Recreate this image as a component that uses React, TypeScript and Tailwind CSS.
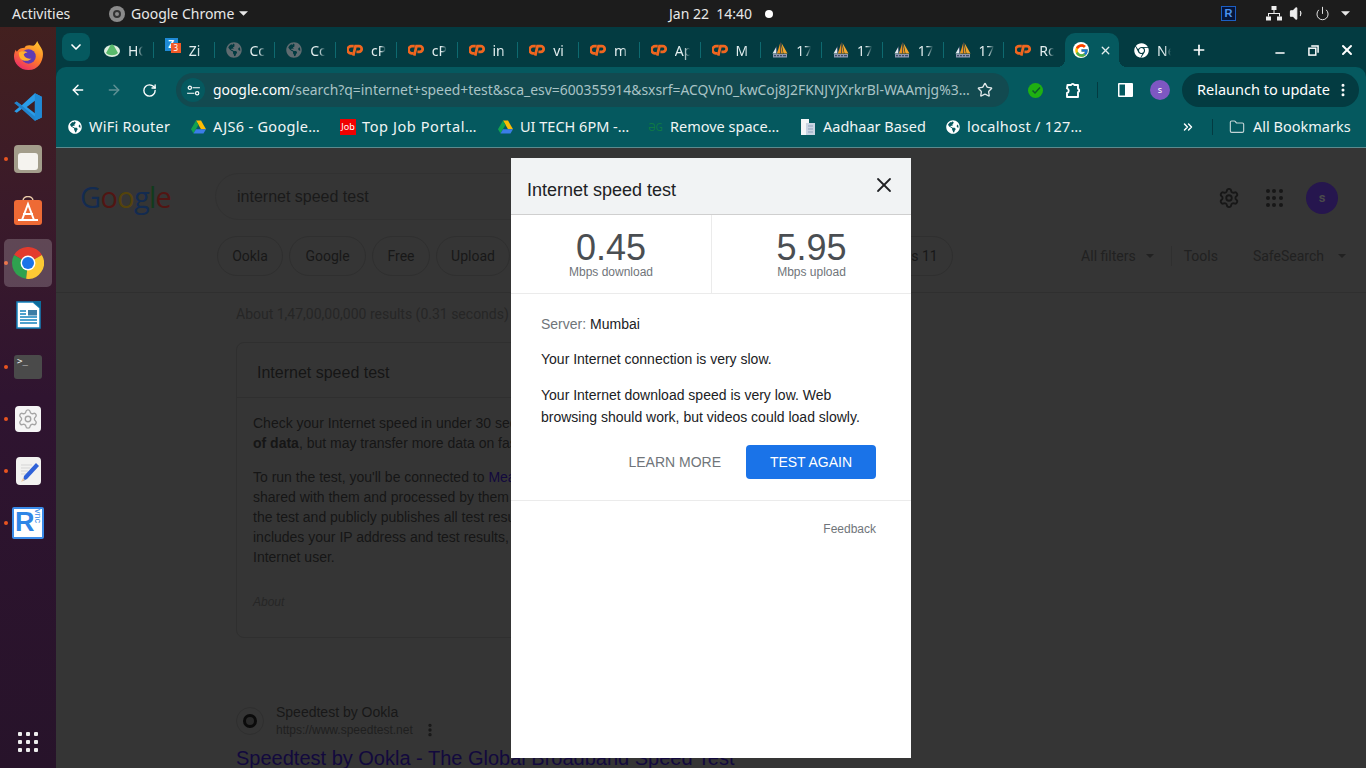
import React from "react";
import {
  ArrowLeft, ArrowRight, ChevronDown, ChevronsRight, EllipsisVertical, Folder, Minus, Plus,
  Power, RotateCw, Settings, Star, Volume1, X,
} from "lucide-react";
import { FaChrome, FaGlobeAmericas } from "react-icons/fa";
import { FcGoogle } from "react-icons/fc";

const Caret = ({ className }: { className: string }) => (
  <svg viewBox="0 0 10 5" className={className}>
    <path d="M0 0h10L5 5z" fill="currentColor" />
  </svg>
);

const CPanel = () => (
  <svg viewBox="0 0 17 12" className="w-4 h-3 shrink-0" fill="none" stroke="#f0661f" strokeWidth="2.9">
    <path d="M7.2 2H4.8a3.8 3.8 0 0 0-.8 7.6H6" />
    <path d="M6.6 12l2.4-10h3.6a2.7 2.7 0 0 1 0 6H10" />
  </svg>
);

const Sails = () => (
  <svg viewBox="0 0 16 16" className="w-4 h-4 shrink-0">
    <path d="M0.5 11.5L4.5 4.5 5.5 11.5z" fill="#e3e9ef" />
    <path d="M5 11.5L8.5 0 11 11.5z" fill="#e8941f" />
    <path d="M9.5 1L15.5 11.5H11.5z" fill="#f2a52e" />
    <path d="M8.5 0v11.5M4.5 4.5v7" stroke="#1c3350" strokeWidth=".7" />
    <rect x="1" y="12" width="14" height="3.5" fill="#8d97b0" />
    <path d="M2 13.7h2M5 13.7h2M8 13.7h2M11 13.7h3" stroke="#2d3a55" />
  </svg>
);

const Drive = () => (
  <svg viewBox="0 0 16 14" className="w-[15px] h-[14px] shrink-0">
    <path d="M5.3 0h5.4l5.3 9.3h-5.3z" fill="#fbbc04" />
    <path d="M5.3 0L0 9.3 2.7 14l5.3-9.3z" fill="#12a150" />
    <path d="M2.7 14h10.6l2.7-4.7H5.3z" fill="#3b7de8" />
  </svg>
);

const ChromeLogo = ({ className }: { className: string }) => (
  <svg viewBox="0 0 24 24" className={className}>
    <path d="M12 12L1.6 6A12 12 0 0 1 22.4 6z" fill="#e33b2e" />
    <path d="M12 12L1.6 6A12 12 0 0 0 10.6 23.9z" fill="#2fa24f" />
    <path d="M12 12l10.4-6A12 12 0 0 1 10.6 23.9z" fill="#fcc934" />
    <circle cx="12" cy="12" r="5.6" fill="#fff" />
    <circle cx="12" cy="12" r="4.5" fill="#1a73e8" />
  </svg>
);

const Firefox = () => (
  <svg viewBox="0 0 32 32" className="w-[31px] h-[31px]">
    <defs>
      <linearGradient id="ffx" x1="0.8" y1="0" x2="0.2" y2="1">
        <stop offset="0" stopColor="#ffc62e" />
        <stop offset="0.5" stopColor="#ff7b2a" />
        <stop offset="1" stopColor="#e9256e" />
      </linearGradient>
    </defs>
    <path d="M25 1c1 3 4 6 5.5 10 2 8-3 20-14.5 20C7 31 1 24 1 17c0-3 1-6 2-7 0 1 1 2 1 2 2-3 5-4 8-4 1-3 5-3 9-2 2-1 3-3 4-5z" fill="url(#ffx)" />
    <circle cx="16" cy="17" r="7.5" fill="#5f3bb5" />
    <path d="M6 13c3-2 7-2 9 0-2 0-3 1-4 2 1 3 4 5 8 4-3 4-10 3-12-1-1-2-1-4-1-5z" fill="#ffb02e" />
  </svg>
);

const VsCode = () => (
  <svg viewBox="0 0 24 24" className="w-[30px] h-[30px]">
    <path fillRule="evenodd" d="M17.5 1L23 3.7v16.6L17.5 23 7 13.5 3 16.5 1 15.3 5 12 1 8.7 3 7.5 7 10.5zM17.5 7L11 12l6.5 5z" fill="#2a9ce8" />
    <path d="M17.5 1L23 3.7v16.6L17.5 23z" fill="#1f8ad6" />
    <path d="M1 8.7L3 7.5l14.5 12V23L7 13.5z" fill="#1b6fb5" opacity=".55" />
  </svg>
);

const DockIcon = ({ running, children, active }: { running?: boolean; active?: boolean; children: React.ReactNode }) => (
  <div className="relative w-14 h-[52px] flex items-center justify-center shrink-0">
    {running && <span className="absolute left-1 top-[24px] w-1 h-1 rounded-full bg-[#e95420]" />}
    {active && <span className="absolute left-1 top-[2px] w-[48px] h-[48px] rounded-[5px] bg-white/20" />}
    <div className="relative flex items-center justify-center">{children}</div>
  </div>
);

const Dock = () => (
  <div className="w-14 shrink-0 flex flex-col pt-[2px] bg-[linear-gradient(180deg,#43201f_0%,#3a1a2a_25%,#2f1430_50%,#27132a_100%)]">
    <DockIcon><Firefox /></DockIcon>
    <DockIcon><VsCode /></DockIcon>
    <DockIcon running>
      <div className="w-7 h-[28px] rounded-[4px] bg-[#a39d8b] flex items-end justify-center pb-[3px]">
        <div className="w-5 h-[17px] rounded-[3px] bg-[#f5f3ef]" />
      </div>
    </DockIcon>
    <DockIcon>
      <svg viewBox="0 0 28 30" className="w-7 h-[30px]">
        <path d="M9 5c0-6 10-6 10 0" fill="none" stroke="#e8c9a8" strokeWidth="1.5" />
        <rect x="0" y="4" width="28" height="25" rx="3" fill="#ee6a35" />
        <path d="M8 24L14 8l6 16M9 18h10M4 24h20" fill="none" stroke="#fff" strokeWidth="2" />
      </svg>
    </DockIcon>
    <DockIcon running active><ChromeLogo className="w-8 h-8" /></DockIcon>
    <DockIcon>
      <svg viewBox="0 0 25 28" className="w-[25px] h-7">
        <path d="M1 1h16l7 6v20H1z" fill="#fff" stroke="#1583bd" strokeWidth="1.5" />
        <path d="M17 0l8 8V0z" fill="#0d6c9c" />
        <path d="M4 10h6M4 13h6M4 16h17M4 19h17M4 22h17" stroke="#1583bd" strokeWidth="1.4" />
        <rect x="12" y="9" width="9" height="5.5" fill="#3d7da5" />
      </svg>
    </DockIcon>
    <DockIcon running>
      <div className="w-7 h-6 rounded-[3px] bg-[#4a4a4a] text-[#eee] text-[9px] leading-[10px] pl-[3px] pt-[1px] font-['DejaVu_Sans_Mono',monospace]">&gt;_</div>
    </DockIcon>
    <DockIcon running>
      <div className="w-[26px] h-[26px] rounded-[4px] bg-[#f5f5f5] flex items-center justify-center">
        <Settings className="w-[22px] h-[22px] text-[#a5a5a5]" strokeWidth={1.5} />
      </div>
    </DockIcon>
    <DockIcon running>
      <div className="w-[25px] h-7 rounded-[4px] bg-[#f2f2f0] flex items-center justify-center">
        <svg viewBox="0 0 25 28" className="w-[25px] h-7">
          <path d="M5 8h11M5 11h9M5 14h7M5 17h5" stroke="#d5d5d5" />
          <path d="M8 19L20 6l3 3-12 13-4 2z" fill="#2f62d8" />
          <path d="M7 21l-2 4 4-2z" fill="#eccaa0" />
        </svg>
      </div>
    </DockIcon>
    <DockIcon running>
      <div className="relative w-8 h-8 rounded-[2px] bg-white border-2 border-[#3b8cea] overflow-hidden">
        <span className="absolute left-[1px] top-[-5px] text-[27px] leading-[36px] font-bold text-[#2f86e6] font-['Liberation_Sans',sans-serif]">R</span>
        <span className="absolute right-[0px] top-[0px] text-[9px] leading-[9px] text-[#2f86e6] [writing-mode:vertical-rl] font-['Liberation_Sans',sans-serif]">vnc</span>
      </div>
    </DockIcon>
    <div className="mt-auto mb-[16px] ml-[18px] grid grid-cols-3 gap-x-1 gap-y-1 w-[20px]">
      {Array.from({ length: 9 }).map((_, i) => (
        <span key={i} className="w-1 h-1 bg-[#eee] rounded-[1px]" />
      ))}
    </div>
  </div>
);

const TopBar = () => (
  <div className="h-[27px] bg-[#1c1c1c] flex items-center text-[#e8e8e8] text-[14px] font-['Noto_Sans',sans-serif] relative shrink-0">
    <span className="ml-[12px] w-[97px]">Activities</span>
    <span className="w-4 h-4 rounded-full bg-[#8b8b8b] flex items-center justify-center">
      <span className="w-[8px] h-[8px] rounded-full border-2 border-[#333]" />
    </span>
    <span className="ml-[6px]">Google Chrome</span>
    <Caret className="w-[9px] h-[5px] ml-[5px]" />
    <div className="absolute left-[669px] top-0 h-full flex items-center">
      <span className="text-[14px] whitespace-pre">Jan 22  14:40</span>
      <span className="ml-[13px] w-2 h-2 rounded-full bg-white" />
    </div>
    <div className="ml-auto flex items-center">
      <span className="w-[15px] h-[15px] bg-[#06153a] border border-[#1c5fc4] text-[#4b93ee] text-[11px] leading-[12px] font-bold flex justify-center font-['Liberation_Sans',sans-serif]">R</span>
      <svg viewBox="0 0 16 15" className="w-4 h-[15px] ml-[30px]" fill="#eee">
        <rect x="5.5" y="0" width="5" height="4" />
        <rect x="0" y="10.5" width="5" height="4" />
        <rect x="11" y="10.5" width="5" height="4" />
        <path d="M7.5 4h1v3h5.5v3.5h-1V8H3v2.5H2V7h5.5z" />
      </svg>
      <Volume1 className="w-[17px] h-[17px] ml-[7px] fill-[#eee] text-[#eee]" strokeWidth={1.5} />
      <Power className="w-[15px] h-[15px] ml-[9px] text-[#eee]" strokeWidth={1.5} />
      <Caret className="w-[9px] h-[5px] ml-[11px] mr-[16px]" />
    </div>
  </div>
);

type TabItem = { icon: React.ReactNode; label: string; noSep?: boolean };

const globeGrey = <FaGlobeAmericas className="w-4 h-4 shrink-0 text-[#5f6b70]" />;

const tabs: TabItem[] = [
  {
    icon: (
      <svg viewBox="0 0 16 14" className="w-4 h-[14px] shrink-0">
        <ellipse cx="8" cy="8" rx="8" ry="6" fill="#dfeee0" />
        <path d="M2 10l4-7c1-2 3-2 4 0l4 7c-3 3-9 3-12 0z" fill="#59b96b" />
      </svg>
    ),
    label: "HC",
  },
  {
    icon: (
      <div className="relative w-[16px] h-[16px] shrink-0">
        <span className="absolute left-0 top-[-4px] w-[13px] h-[13px] bg-[#1f8ad6] text-white text-[10px] leading-[13px] font-bold text-center">Z</span>
        <span className="absolute left-[6px] top-[1px] w-[10px] h-[10px] bg-[#f05a28] text-white text-[8px] leading-[10px] text-center">3</span>
      </div>
    ),
    label: "Zi",
  },
  { icon: globeGrey, label: "Cc" },
  { icon: globeGrey, label: "Cc" },
  { icon: <CPanel />, label: "cP" },
  { icon: <CPanel />, label: "cP" },
  { icon: <CPanel />, label: "in" },
  { icon: <CPanel />, label: "vi" },
  { icon: <CPanel />, label: "m" },
  { icon: <CPanel />, label: "Ap" },
  { icon: <CPanel />, label: "M" },
  { icon: <Sails />, label: "17" },
  { icon: <Sails />, label: "17" },
  { icon: <Sails />, label: "17" },
  { icon: <Sails />, label: "17" },
  { icon: <CPanel />, label: "Ro", noSep: true },
];

const Tab = ({ icon, label, noSep }: TabItem) => (
  <div className="w-[60.75px] h-full pl-[11px] flex items-center shrink-0">
    {icon}
    <span className="ml-[8px] w-[15px] overflow-hidden whitespace-nowrap text-[14px] text-[#e3eeef] [mask-image:linear-gradient(90deg,#000_60%,transparent_100%)]">{label}</span>
    {!noSep && <span className="ml-auto w-[1px] h-4 bg-[#0e6a70]" />}
  </div>
);

const TabStrip = () => (
  <div className="h-10 bg-[#033b41] flex items-end font-['Noto_Sans',sans-serif] shrink-0">
    <div className="self-start mt-[6px] ml-[6px] mr-[3px] w-7 h-7 rounded-[8px] bg-[#05595f] flex items-center justify-center">
      <ChevronDown className="w-4 h-4 text-white" strokeWidth={2.5} />
    </div>
    <div className="h-[34px] flex">
      {tabs.map((t, i) => (
        <Tab key={i} {...t} />
      ))}
      <div className="relative w-[54px] h-full rounded-t-[10px] bg-[#05595f] pl-2 flex items-center shrink-0">
        <span className="absolute -left-2 bottom-0 w-2 h-2 bg-[radial-gradient(circle_at_0_0,transparent_8px,#05595f_8px)]" />
        <span className="absolute -right-2 bottom-0 w-2 h-2 bg-[radial-gradient(circle_at_100%_0,transparent_8px,#05595f_8px)]" />
        <span className="w-4 h-4 rounded-full bg-white flex items-center justify-center shrink-0">
          <FcGoogle className="w-[15px] h-[15px]" />
        </span>
        <X className="ml-[10px] w-[13px] h-[13px] text-[#e3eeef]" strokeWidth={2.5} />
      </div>
      <div className="w-[60px] pl-[15px] h-full flex items-center shrink-0">
        <FaChrome className="w-[15px] h-[15px] text-white shrink-0" />
        <span className="ml-[8px] w-[14px] overflow-hidden whitespace-nowrap text-[14px] text-[#e3eeef] [mask-image:linear-gradient(90deg,#000_55%,transparent_100%)]">Ne</span>
      </div>
      <div className="h-full flex items-center ml-[12px]">
        <Plus className="w-4 h-4 text-white" strokeWidth={2.5} />
      </div>
    </div>
    <div className="ml-auto h-[34px] flex items-center text-white pr-[11px]">
      <Minus className="w-[14px] h-[14px] mt-[6px]" strokeWidth={2.5} />
      <svg viewBox="0 0 12 12" className="ml-[21px] w-[11px] h-[11px]" fill="none" stroke="currentColor" strokeWidth="1.6">
        <rect x="1" y="3.5" width="7.5" height="7.5" />
        <path d="M3.5 1H11v7.5" />
      </svg>
      <X className="ml-[20px] w-[16px] h-[16px]" strokeWidth={3} />
    </div>
  </div>
);

const Toolbar = () => (
  <div className="h-10 bg-[#033b41] shrink-0 font-['Noto_Sans',sans-serif]">
    <div className="h-full bg-[#05595f] rounded-t-[10px] flex items-start pt-[6px] text-white">
      <div className="w-[120px] h-[34px] flex items-center pl-[14px] shrink-0">
        <ArrowLeft className="w-4 h-4" strokeWidth={2.2} />
        <ArrowRight className="ml-[20px] w-4 h-4 text-[#5f9094]" strokeWidth={2.2} />
        <RotateCw className="ml-[20px] w-[15px] h-[15px]" strokeWidth={2.2} />
      </div>
      <div className="w-[833px] h-[34px] rounded-full bg-[#124a50] flex items-center pl-[5px] shrink-0">
        <span className="w-6 h-6 rounded-full bg-[#05595f] flex items-center justify-center shrink-0">
          <svg viewBox="0 0 14 12" className="w-[13px] h-[11px]" fill="none" stroke="#fff" strokeWidth="1.3">
            <circle cx="3" cy="3" r="1.8" />
            <path d="M6 3h8M0 9h8" />
            <circle cx="11" cy="9" r="1.8" />
          </svg>
        </span>
        <span className="ml-[8px] w-[760px] text-[13.9px] whitespace-nowrap overflow-hidden">
          google.com<span className="text-[#a9c3c6]">/search?q=internet+speed+test&amp;sca_esv=600355914&amp;sxsrf=ACQVn0_kwCoj8J2FKNJYJXrkrBl-WAAmjg%3…</span>
        </span>
        <Star className="ml-[4px] w-4 h-4 text-[#dfe8e9]" strokeWidth={2} />
      </div>
      <div className="h-[34px] flex items-center">
        <span className="ml-[19px] w-[15px] h-[15px] rounded-full bg-[#1fb012] flex items-center justify-center">
          <svg viewBox="0 0 10 10" className="w-[10px] h-[10px]" fill="none" stroke="#0c5a2a" strokeWidth="1.5">
            <path d="M1.5 5.5l2.5 2.5 5-5.5" />
          </svg>
        </span>
        <svg viewBox="0 0 17 17" className="ml-[20px] w-[17px] h-[17px]" fill="none" stroke="#fff" strokeWidth="1.9" strokeLinejoin="round">
          <path d="M4.5 3h3.6a1.7 1.7 0 0 1 3.2 0H15v3.8a1.8 1.8 0 0 1 0 3.4V15H4V11a2.4 2.4 0 0 0 0-4.6z" />
        </svg>
        <span className="ml-[17px] w-[1px] h-4 bg-[#033b41]" />
        <svg viewBox="0 0 15 14" className="ml-[20px] w-[15px] h-[14px]" fill="#fff">
          <path d="M1 0h13a1 1 0 0 1 1 1v12a1 1 0 0 1-1 1H1a1 1 0 0 1-1-1V1a1 1 0 0 1 1-1zm.5 1.5v11H7v-11z" />
        </svg>
        <span className="ml-[17px] w-5 h-5 rounded-full bg-[#7e57c2] text-[9px] flex items-center justify-center">s</span>
        <div className="ml-[12px] w-[177px] h-[34px] rounded-full bg-[#033b41] flex items-center pl-[15px] text-[14.5px]">
          <span className="whitespace-nowrap">Relaunch to update</span>
          <EllipsisVertical className="ml-auto mr-[8px] w-[16px] h-[16px]" strokeWidth={2.5} />
        </div>
      </div>
    </div>
  </div>
);

const Bookmark = ({ icon, label, className }: { icon: React.ReactNode; label: string; className: string }) => (
  <div className={`flex items-center shrink-0 ${className}`}>
    {icon}
    <span className="ml-[7px] text-[14.5px] whitespace-nowrap text-[#f0f5f5]">{label}</span>
  </div>
);

const whiteGlobe = <FaGlobeAmericas className="w-[14px] h-[14px] shrink-0 text-white" />;

const Bookmarks = () => (
  <div className="h-[41px] bg-[#05595f] border-b border-[#5c8a8e] flex items-center pl-[12px] font-['Noto_Sans',sans-serif] shrink-0">
    <Bookmark className="w-[123px] tracking-[0.25px]" icon={whiteGlobe} label="WiFi Router" />
    <Bookmark className="w-[149px] tracking-[0.3px]" icon={<Drive />} label="AJS6 - Google…" />
    <Bookmark
      className="w-[158px] tracking-[0.6px]"
      icon={<span className="w-4 h-4 bg-[#f00000] text-white text-[9px] tracking-normal leading-4 text-center shrink-0 -mr-[1px]">Job</span>}
      label="Top Job Portal…"
    />
    <Bookmark className="w-[150px]" icon={<Drive />} label="UI TECH 6PM -…" />
    <Bookmark
      className="w-[152px]"
      icon={<span className="w-[15px] text-[#0f7a45] text-[10px] text-center shrink-0">ƏG</span>}
      label="Remove space…"
    />
    <Bookmark
      className="w-[146px]"
      icon={
        <svg viewBox="0 0 16 16" className="w-4 h-4 shrink-0">
          <path d="M1 0h8v16H1z" fill="#f4f6f8" />
          <path d="M6 4h9v12H6z" fill="#c9d4e2" />
          <path d="M8 7h5M8 10h5M8 13h5" stroke="#8fa3bd" />
        </svg>
      }
      label="Aadhaar Based"
    />
    <Bookmark className="w-[238px] tracking-[0.3px]" icon={whiteGlobe} label="localhost / 127…" />
    <ChevronsRight className="w-[14px] h-[14px] -ml-[3px] text-white shrink-0" strokeWidth={2.5} />
    <span className="ml-[17px] w-[1px] h-4 bg-[#033b41]" />
    <Folder className="ml-[16px] w-4 h-4 text-[#c3d4d6] shrink-0" strokeWidth={1.7} />
    <span className="ml-[8px] text-[14.5px] whitespace-nowrap text-[#f0f5f5]">All Bookmarks</span>
  </div>
);

const chips = [
  { label: "Ookla", w: "w-[66px]" },
  { label: "Google", w: "w-[77px]" },
  { label: "Free", w: "w-[58px]" },
  { label: "Upload", w: "w-[74px]" },
  { label: "Fast", w: "w-[60px]" },
  { label: "Speed", w: "w-[72px]" },
  { label: "Broadband", w: "w-[100px]" },
  { label: "Check", w: "w-[74px]" },
  { label: "Windows 11", w: "w-[107px]" },
];

const PageHeader = () => (
  <div className="h-[145px] shrink-0 border-b border-[#2f2f2f] font-['Roboto',sans-serif]">
    <div className="h-[87px] pt-[28px] flex items-start">
      <div className="ml-[24px] mt-[3px] w-[135px] h-[36px] text-[29px] leading-[36px] tracking-[-0.7px] font-['Open_Sans',sans-serif]">
        <span className="text-[#132b50]">G</span>
        <span className="text-[#511513]">o</span>
        <span className="text-[#54430c]">o</span>
        <span className="text-[#132b50]">g</span>
        <span className="text-[#113b1c]">l</span>
        <span className="text-[#511513]">e</span>
      </div>
      <div className="w-[600px] h-[47px] -mt-[3px] pt-[1px] rounded-full border border-[#313131] flex items-center pl-[21px] text-[16px] text-[#1a1a1a] font-['Liberation_Sans',sans-serif]">
        internet speed test
      </div>
      <div className="ml-auto mt-[6px] flex items-center text-[#171717]">
        <Settings className="w-[22px] h-[22px]" strokeWidth={2} />
        <div className="ml-[26px] grid grid-cols-3 gap-[3px] w-[16px]">
          {Array.from({ length: 9 }).map((_, i) => (
            <span key={i} className="w-[4px] h-[4px] rounded-full bg-[#171717]" />
          ))}
        </div>
        <span className="ml-[24px] mr-[28px] w-8 h-8 rounded-full bg-[#26164e] text-[#4a4a4a] text-[13px] font-bold flex items-center justify-center">s</span>
      </div>
    </div>
    <div className="h-10 flex items-center text-[14px] text-[#181818] mt-[1px]">
      <div className="ml-[161px] flex gap-[6px]">
        {chips.map((c) => (
          <span key={c.label} className={`${c.w} h-10 shrink-0 rounded-full border border-[#2f2f2f] flex items-center justify-center whitespace-nowrap overflow-hidden`}>
            {c.label}
          </span>
        ))}
      </div>
      <div className="ml-auto flex items-center text-[#212121]">
        <span>All filters</span>
        <Caret className="w-2 h-1 ml-[10px]" />
        <span className="ml-[17px] w-[1px] h-5 bg-[#2f2f2f]" />
        <span className="ml-[12px]">Tools</span>
        <span className="ml-[35px]">SafeSearch</span>
        <Caret className="w-2 h-1 ml-[14px] mr-[20px]" />
      </div>
    </div>
  </div>
);

const PageBody = () => (
  <div className="pl-[180px] font-['Liberation_Sans',sans-serif] text-[14px] text-[#161616]">
    <p className="mt-[12px] h-[18px] leading-[18px] text-[#262626] font-['Roboto',sans-serif] whitespace-nowrap">
      About 1,47,00,00,000 results (0.31 seconds)
    </p>
    <div className="mt-[19px] w-[652px] h-[296px] rounded-[8px] border border-[#2f2f2f]">
      <div className="h-[55px] pt-[5px] border-b border-[#2f2f2f] pl-[20px] flex items-center text-[16px]">Internet speed test</div>
      <div className="pl-[16px] pt-[15px] leading-[20px] whitespace-nowrap">
        <p>Check your Internet speed in under 30 seconds. The test usually</p>
        <p><b>of data</b>, but may transfer more data on fast connections.</p>
        <p className="mt-[14px]">To run the test, you'll be connected to <span className="text-[#12093d]">Measurement Lab</span></p>
        <p>shared with them and processed by them</p>
        <p>the test and publicly publishes all test results</p>
        <p>includes your IP address and test results,</p>
        <p>Internet user.</p>
        <p className="mt-[25px] text-[12px] italic text-[#262626]">About</p>
      </div>
    </div>
    <div className="mt-[65px] flex items-center">
      <span className="w-7 h-7 rounded-full border border-[#2f2f2f] flex items-center justify-center">
        <span className="w-[14px] h-[14px] rounded-full border-[3px] border-[#0b0b0b] bg-[#2a2a2a]" />
      </span>
      <div className="ml-[12px]">
        <p className="leading-[18px] text-[#181818]">Speedtest by Ookla</p>
        <div className="flex items-center leading-[18px] text-[12px] text-[#1f1f1f]">
          https://www.speedtest.net
          <EllipsisVertical className="ml-[9px] w-4 h-4 text-[#171717]" strokeWidth={3} />
        </div>
      </div>
    </div>
    <p className="mt-[6px] text-[20px] leading-[26px] text-[#12093d] whitespace-nowrap">Speedtest by Ookla - The Global Broadband Speed Test</p>
  </div>
);

const Modal = () => (
  <div className="absolute left-[455px] top-[10px] w-[400px] h-[600px] bg-white font-['Liberation_Sans',sans-serif] flex flex-col">
    <div className="h-[57px] shrink-0 bg-[#f1f3f4] border-b border-[#cfcfcf] pl-4 pr-[15px] flex items-start justify-between">
      <h2 className="mt-[21px] text-[18px] leading-[22px] text-[#202124]">Internet speed test</h2>
      <X className="mt-[15px] w-6 h-6 text-[#202124]" strokeWidth={1.8} />
    </div>
    <div className="h-[79px] shrink-0 grid grid-cols-[201px_199px] border-b border-[#ebebeb] text-center">
      <div className="border-r border-[#ebebeb] pt-[14px]">
        <div className="text-[36px] leading-[37px] text-[#4a4e52]">0.45</div>
        <div className="text-[12px] leading-[12px] text-[#70757a]">Mbps download</div>
      </div>
      <div className="pt-[14px]">
        <div className="text-[36px] leading-[37px] text-[#4a4e52]">5.95</div>
        <div className="text-[12px] leading-[12px] text-[#70757a]">Mbps upload</div>
      </div>
    </div>
    <div className="h-[207px] shrink-0 px-[30px] border-b border-[#ebebeb] text-[14px] text-[#202124]">
      <p className="mt-[21px] leading-[18px]"><span className="text-[#70757a]">Server:</span> Mumbai</p>
      <p className="mt-[17px] leading-[18px]">Your Internet connection is very slow.</p>
      <p className="mt-[16px] leading-[22px]">Your Internet download speed is very low. Web browsing should work, but videos could load slowly.</p>
      <div className="mt-[17px] flex items-center justify-end pr-[5px]">
        <span className="text-[#70757a]">LEARN MORE</span>
        <span className="ml-[25px] w-[130px] h-[34px] rounded-[4px] bg-[#1a73e8] text-white flex items-center justify-center">TEST AGAIN</span>
      </div>
    </div>
    <div className="pt-[21px] pr-[35px] text-right text-[12px] leading-[14px] text-[#70757a]">Feedback</div>
  </div>
);

export default function App() {
  return (
    <div className="w-[1366px] h-[768px] overflow-hidden flex flex-col bg-[#353535]">
      <TopBar />
      <div className="flex-1 flex min-h-0">
        <Dock />
        <div className="flex-1 flex flex-col min-w-0">
          <TabStrip />
          <Toolbar />
          <Bookmarks />
          <div className="relative flex-1 overflow-hidden bg-[#353535] flex flex-col">
            <PageHeader />
            <PageBody />
            <Modal />
          </div>
        </div>
      </div>
    </div>
  );
}
